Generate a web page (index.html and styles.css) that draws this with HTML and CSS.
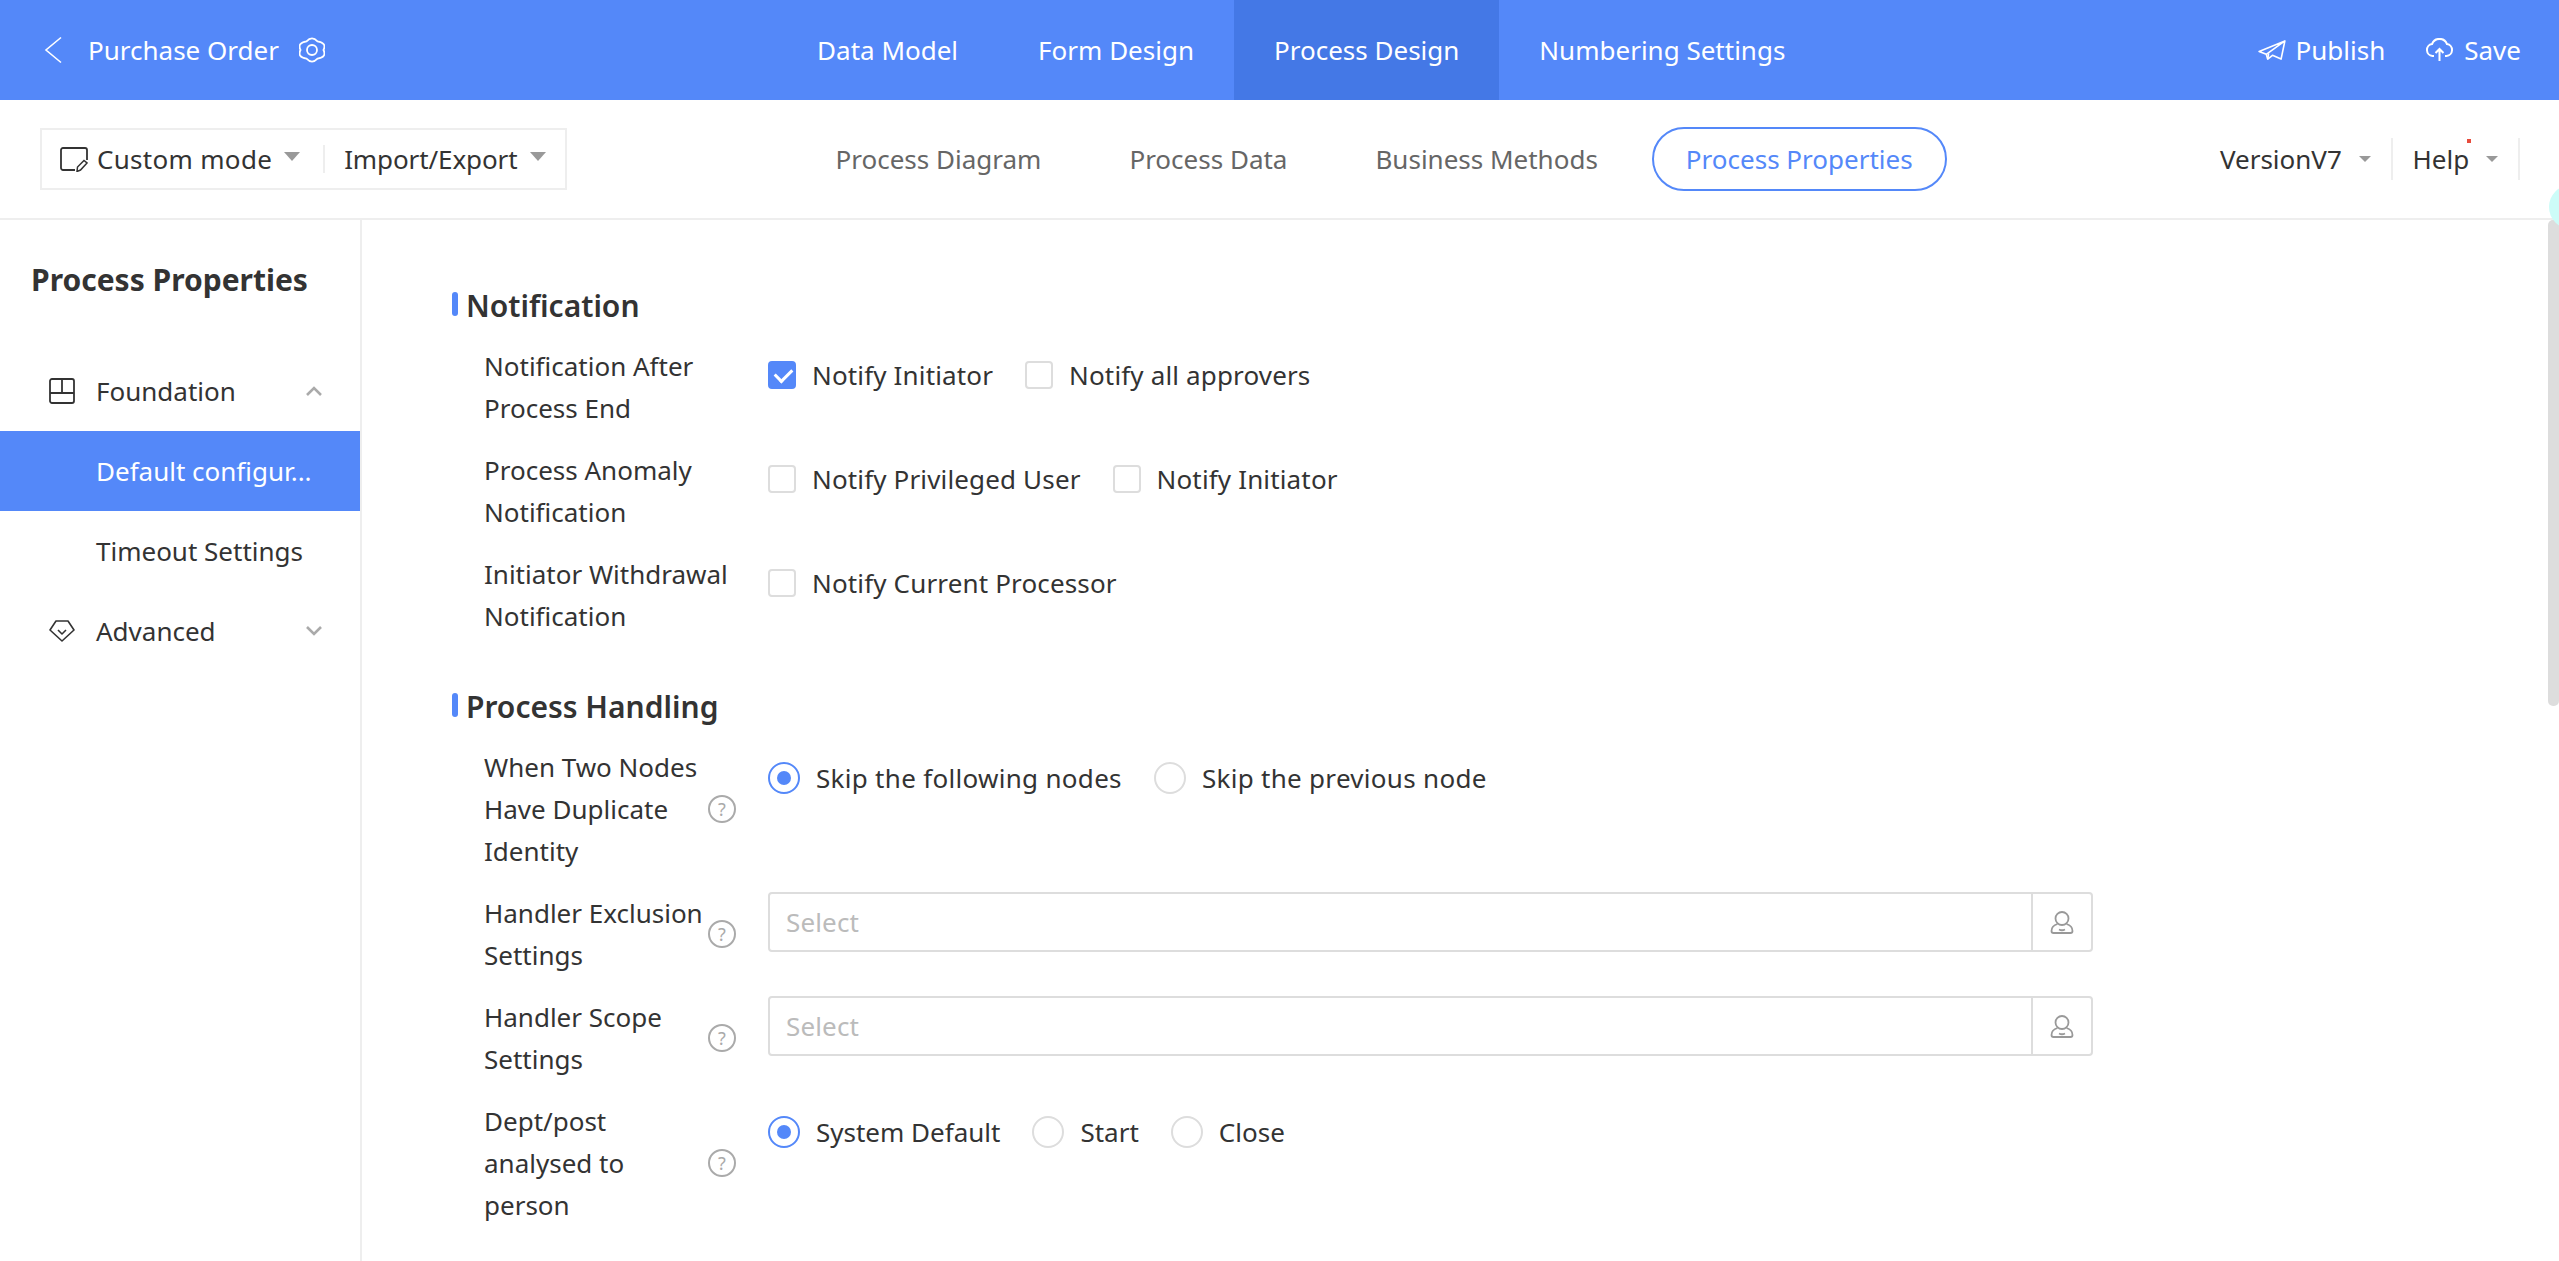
FILE: index.html
```html
<!DOCTYPE html>
<html lang="en">
<head>
    <meta charset="UTF-8">
    <meta name="viewport" content="width=device-width, initial-scale=1.0">
    <title>Purchase Order - Process Properties</title>
    <link rel="stylesheet" href="styles.css">
</head>
<body>
    <header class="topbar">
        <div class="topbar-left">
            <svg class="back-icon" width="18" height="28" viewBox="0 0 18 28" fill="none" stroke="#fff" stroke-width="1.600"><path d="M17 1.500 2 14l15 12.500"/></svg>
            <span class="app-title">Purchase Order</span>
            <svg width="26" height="26" viewBox="0 0 26 26" fill="none" stroke="#fff" stroke-width="1.800"><path d="M7.500 4.300Q13-1.500 18.500 4.300 28 6 24.500 13 28 20 18.500 21.700 13 27.500 7.500 21.700-2 20 1.500 13-2 6 7.500 4.300z"/><circle cx="13" cy="13" r="5"/></svg>
        </div>
        <nav class="topbar-nav">
            <a class="nav-item">Data Model</a>
            <a class="nav-item">Form Design</a>
            <a class="nav-item active">Process Design</a>
            <a class="nav-item">Numbering Settings</a>
        </nav>
        <div class="topbar-right">
            <a class="top-action">
                <svg width="28" height="21" viewBox="0 0 29 22" fill="none" stroke="#fff" stroke-width="1.700" stroke-linejoin="round"><path d="M28 1 1 12l7.500 3L28 1l-4 19-9-4-5 4-1.500-5"/><path d="m10 20 1-6"/></svg>
                Publish
            </a>
            <a class="top-action">
                <svg width="29" height="24" viewBox="0 0 29 24" fill="none" stroke="#fff" stroke-width="2"><path d="M9 18H7.500a6 6 0 0 1-.5-11.900 8 8 0 0 1 15 0A6 6 0 0 1 21.500 18H20"/><path d="M14.500 23V11M10.500 15l4-4 4 4"/></svg>
                Save
            </a>
        </div>
    </header>

    <div class="subbar">
        <div class="mode-box">
            <svg width="28" height="25" viewBox="0 0 28 25" fill="none" stroke="#333" stroke-width="1.800"><path d="M15 23H3a2 2 0 0 1-2-2V3a2 2 0 0 1 2-2h22a2 2 0 0 1 2 2v10"/><path d="m17 24.500.5-4.500 6.500-6.500 3 2.500-6.500 7z" stroke-width="1.500"/></svg>
            <span class="mode-text">Custom mode</span>
            <i class="caret"></i>
            <span class="mode-divider"></span>
            <span class="mode-text tight">Import/Export</span>
            <i class="caret"></i>
        </div>
        <nav class="subnav">
            <a class="subnav-item">Process Diagram</a>
            <a class="subnav-item">Process Data</a>
            <a class="subnav-item">Business Methods</a>
            <a class="subnav-item active">Process Properties</a>
        </nav>
        <div class="subbar-right">
            <div class="sub-link">VersionV7 <i class="caret small"></i></div>
            <div class="sub-link help"><span class="help-text">Help<b class="red-dot"></b></span> <i class="caret small"></i></div>
        </div>
        <span class="teal-dot"></span>
    </div>

    <div class="layout">
        <aside class="sidebar">
            <h2 class="side-title">Process Properties</h2>
            <ul class="side-menu">
                <li class="side-item">
                    <svg width="26" height="26" viewBox="0 0 26 26" fill="none" stroke="#333" stroke-width="1.800"><rect x="1" y="1" width="24" height="24" rx="2"/><path d="M1 15h24M13 1v14"/></svg>
                    <span>Foundation</span>
                    <svg class="chevron" width="16" height="10" viewBox="0 0 16 10" fill="none" stroke="#aaa" stroke-width="2.600"><path d="m1 9 7-7 7 7"/></svg>
                </li>
                <li class="side-item sub active"><span>Default configur...</span></li>
                <li class="side-item sub"><span>Timeout Settings</span></li>
                <li class="side-item">
                    <svg width="26" height="22" viewBox="0 0 26 22" fill="none" stroke="#333" stroke-width="1.600" stroke-linejoin="round"><path d="M7 1h12l6 9-12 11L1 10z"/><path d="m9 10 4 4 4-4"/></svg>
                    <span>Advanced</span>
                    <svg class="chevron" width="16" height="10" viewBox="0 0 16 10" fill="none" stroke="#aaa" stroke-width="2.600"><path d="m1 1 7 7 7-7"/></svg>
                </li>
            </ul>
        </aside>

        <main class="content">
            <h3 class="section-title">Notification</h3>
            <div class="form-row">
                <label class="row-label">Notification After Process End</label>
                <div class="row-control">
                    <span class="option"><i class="check on"></i>Notify Initiator</span>
                    <span class="option"><i class="check"></i>Notify all approvers</span>
                </div>
            </div>
            <div class="form-row">
                <label class="row-label">Process Anomaly Notification</label>
                <div class="row-control">
                    <span class="option"><i class="check"></i>Notify Privileged User</span>
                    <span class="option"><i class="check"></i>Notify Initiator</span>
                </div>
            </div>
            <div class="form-row">
                <label class="row-label">Initiator Withdrawal Notification</label>
                <div class="row-control">
                    <span class="option"><i class="check"></i>Notify Current Processor</span>
                </div>
            </div>

            <h3 class="section-title second">Process Handling</h3>
            <div class="form-row">
                <label class="row-label has-tip">When Two Nodes Have Duplicate Identity</label>
                <span class="tip">?</span>
                <div class="row-control radios loose">
                    <span class="option"><i class="radio on"></i>Skip the following nodes</span>
                    <span class="option"><i class="radio"></i>Skip the previous node</span>
                </div>
            </div>
            <div class="form-row">
                <label class="row-label has-tip">Handler Exclusion Settings</label>
                <span class="tip">?</span>
                <div class="row-control">
                    <div class="picker">
                        <span class="placeholder">Select</span>
                        <span class="picker-btn">
                            <svg width="24" height="24" viewBox="0 0 24 24" fill="none" stroke="#999" stroke-width="1.800"><circle cx="12" cy="8.500" r="6.500"/><path d="M7.500 14C4 15 1.500 17.500 1.500 21c0 1 .5 2 2 2h17c1.500 0 2-1 2-2 0-3.500-2.500-6-6-7"/><path d="M9 19.500c2 1 4 1 6 0"/></svg>
                        </span>
                    </div>
                </div>
            </div>
            <div class="form-row">
                <label class="row-label has-tip">Handler Scope Settings</label>
                <span class="tip">?</span>
                <div class="row-control">
                    <div class="picker">
                        <span class="placeholder">Select</span>
                        <span class="picker-btn">
                            <svg width="24" height="24" viewBox="0 0 24 24" fill="none" stroke="#999" stroke-width="1.800"><circle cx="12" cy="8.500" r="6.500"/><path d="M7.500 14C4 15 1.500 17.500 1.500 21c0 1 .5 2 2 2h17c1.500 0 2-1 2-2 0-3.500-2.500-6-6-7"/><path d="M9 19.500c2 1 4 1 6 0"/></svg>
                        </span>
                    </div>
                </div>
            </div>
            <div class="form-row">
                <label class="row-label has-tip">Dept/post analysed to person</label>
                <span class="tip">?</span>
                <div class="row-control radios">
                    <span class="option"><i class="radio on"></i>System Default</span>
                    <span class="option"><i class="radio"></i>Start</span>
                    <span class="option"><i class="radio"></i>Close</span>
                </div>
            </div>
        </main>
        <div class="scrollbar"><div class="scroll-thumb"></div></div>
    </div>
</body>
</html>
```

FILE: styles.css
```css
* {
    box-sizing: border-box;
}
html, body {
    height: 100%;
}
body {
    margin: 0;
    display: flex;
    flex-direction: column;
    overflow: hidden;
    background: #fff;
    color: #333;
    font-family: "Noto Sans", Arial, sans-serif;
    font-size: 26px;
}

/* top blue bar */
.topbar {
    height: 100px;
    flex: none;
    background: #5488f9;
    color: #fff;
    display: flex;
    align-items: center;
    justify-content: space-between;
    position: relative;
}
.topbar-left {
    display: flex;
    align-items: center;
    padding-left: 44px;
}
.app-title {
    margin: 0 20px 0 26px;
}
.topbar-nav {
    display: flex;
    height: 100px;
    margin-left: 20px;
}
.nav-item {
    display: flex;
    align-items: center;
    padding: 0 40px;
}
.nav-item.active {
    background: #4478e6;
}
.topbar-right {
    display: flex;
    align-items: center;
    gap: 40px;
    padding-right: 38px;
}
.top-action {
    display: flex;
    align-items: center;
    gap: 10px;
}

/* second bar */
.subbar {
    height: 120px;
    flex: none;
    display: flex;
    align-items: center;
    border-bottom: 2px solid #eee;
    position: relative;
    z-index: 2;
}
.mode-box {
    display: flex;
    align-items: center;
    height: 62px;
    margin-left: 40px;
    padding: 0 19px 0 18px;
    border: 2px solid #eee;
}
.mode-text {
    margin-left: 9px;
    letter-spacing: .3px;
}
.mode-text.tight {
    margin-left: 0;
    letter-spacing: -.1px;
}
.mode-divider {
    width: 2px;
    height: 28px;
    background: #eee;
    margin: 0 19px 0 23px;
}
.caret {
    display: inline-block;
    width: 0;
    height: 0;
    margin-left: 12px;
    margin-top: -6px;
    border-left: 8px solid transparent;
    border-right: 8px solid transparent;
    border-top: 9px solid #999;
}
.caret.small {
    margin-left: 10px;
    border-left-width: 6px;
    border-right-width: 6px;
    border-top-width: 6px;
    vertical-align: middle;
}
.subnav {
    display: flex;
    align-items: center;
    gap: 20px;
    margin-left: 235px;
}
.subnav-item {
    padding: 0 34px;
    color: #666;
}
.subnav-item.active {
    height: 64px;
    padding: 0 32px;
    line-height: 60px;
    color: #5488f9;
    border: 2px solid #5488f9;
    border-radius: 32px;
}
.subbar-right {
    display: flex;
    align-items: center;
    margin-left: auto;
    margin-right: 39px;
}
.sub-link {
    height: 42px;
    line-height: 42px;
    padding-right: 20px;
    border-right: 2px solid #eee;
    white-space: nowrap;
}
.sub-link.help {
    padding-left: 20px;
}
.help-text {
    position: relative;
}
.red-dot {
    position: absolute;
    right: -2px;
    top: -2px;
    width: 4px;
    height: 4px;
    background: #e74c3c;
}
.teal-dot {
    position: absolute;
    right: -34px;
    top: 85px;
    width: 44px;
    height: 44px;
    border-radius: 50%;
    background: #cdfcf8;
}

/* body */
.layout {
    flex: 1;
    display: flex;
    min-height: 0;
    position: relative;
}
.sidebar {
    width: 362px;
    flex: none;
    border-right: 2px solid #eee;
}
.side-title {
    margin: 38px 0 0 31px;
    height: 44px;
    line-height: 44px;
    font-size: 30px;
    font-weight: 700;
}
.side-menu {
    list-style: none;
    margin: 49px 0 0;
    padding: 0;
}
.side-item {
    height: 80px;
    display: flex;
    align-items: center;
    padding-left: 49px;
    gap: 21px;
}
.side-item.sub {
    padding-left: 96px;
}
.side-item.active {
    background: #5488f9;
    color: #fff;
}
.chevron {
    margin-left: auto;
    margin-right: 38px;
}
.content {
    flex: 1;
    padding: 66px 0 0 90px;
    overflow: hidden;
}
.section-title {
    position: relative;
    height: 40px;
    line-height: 40px;
    margin: 0 0 19px;
    padding-left: 14px;
    font-size: 30px;
    font-weight: 600;
}
.section-title::before {
    content: "";
    position: absolute;
    left: 0;
    top: 6px;
    width: 6px;
    height: 24px;
    border-radius: 3px;
    background: #5488f9;
}
.section-title.second {
    margin: 50px 0 19px;
}
.form-row {
    position: relative;
    display: flex;
    align-items: flex-start;
    margin-bottom: 20px;
    padding-left: 32px;
}
.row-label {
    width: 284px;
    padding-right: 30px;
    line-height: 42px;
}
.row-label.has-tip {
    padding-right: 62px;
}
.tip {
    position: absolute;
    left: 256px;
    top: 50%;
    width: 28px;
    height: 28px;
    margin-top: -14px;
    border: 2px solid #aaa;
    border-radius: 50%;
    color: #aaa;
    font-size: 18px;
    line-height: 24px;
    text-align: center;
}
.row-control {
    display: flex;
    align-items: center;
    gap: 32px;
    height: 60px;
    letter-spacing: .15px;
}
.row-control.radios {
    height: 64px;
    letter-spacing: 0;
}
.row-control.loose {
    letter-spacing: .3px;
}
.option {
    display: flex;
    align-items: center;
    gap: 16px;
    white-space: nowrap;
}
.check {
    width: 28px;
    height: 28px;
    border: 2px solid #ddd;
    border-radius: 4px;
    display: block;
    position: relative;
}
.check.on {
    background: #5488f9;
    border-color: #5488f9;
}
.check.on::after {
    content: "";
    position: absolute;
    left: 5px;
    top: 5px;
    width: 14px;
    height: 8px;
    border-left: 3px solid #fff;
    border-bottom: 3px solid #fff;
    transform: rotate(-45deg);
}
.radio {
    width: 32px;
    height: 32px;
    border: 2px solid #ddd;
    border-radius: 50%;
    display: block;
    position: relative;
}
.radio.on {
    border-color: #5488f9;
}
.radio.on::after {
    content: "";
    position: absolute;
    left: 7px;
    top: 7px;
    width: 14px;
    height: 14px;
    border-radius: 50%;
    background: #5488f9;
}
.picker {
    width: 1325px;
    height: 60px;
    display: flex;
    align-items: center;
    justify-content: space-between;
    border: 2px solid #ddd;
    border-radius: 4px;
}
.placeholder {
    padding-left: 16px;
    color: #bbb;
}
.picker-btn {
    width: 60px;
    height: 100%;
    display: flex;
    align-items: center;
    justify-content: center;
    border-left: 2px solid #ddd;
}
.scrollbar {
    position: absolute;
    top: 0;
    right: 0;
    bottom: 0;
    width: 11px;
}
.scroll-thumb {
    height: 486px;
    background: #ddd;
    border-radius: 5px;
}
```
